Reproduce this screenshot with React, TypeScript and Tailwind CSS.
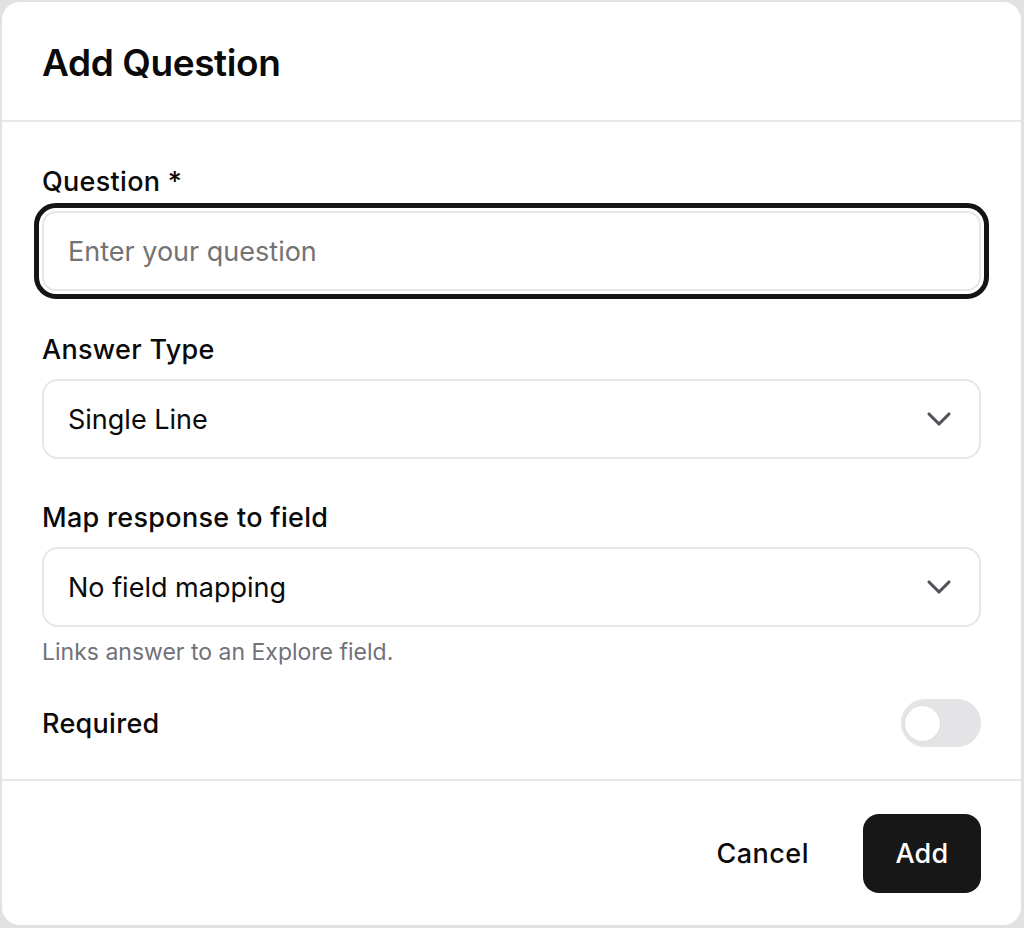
import React from "react";

function Chevron() {
  return (
    <svg width="40" height="40" viewBox="0 0 24 24" fill="none" stroke="#52525b" strokeWidth="1.9" strokeLinecap="round" strokeLinejoin="round">
      <path d="m6 9 6 6 6-6" />
    </svg>
  );
}

function Select({ value }: { value: string }) {
  return (
    <div className="flex h-[80px] w-full items-center justify-between rounded-[16px] border-2 border-[#e7e7e9] bg-white pl-[24px] pr-[20px]">
      <span className="pt-[2px] text-[27px] text-[#0a0a0a]">{value}</span>
      <Chevron />
    </div>
  );
}

export default function App() {
  return (
    <div
      className="h-[928px] w-[1024px] bg-[#e2e2e2] p-[2px] pb-[3px] pr-[3px]"
      style={{ fontFamily: 'Inter, "Noto Sans", sans-serif' }}
    >
      <div className="flex h-full w-full flex-col rounded-[18px] bg-white">
        <div className="flex h-[120px] items-center border-b-2 border-[#e8e8ea] px-[40px] pt-[3px]">
          <h1 className="text-[37px] font-semibold tracking-[-0.4px] text-[#0a0a0a]">Add Question</h1>
        </div>
        <div className="flex flex-col px-[40px] pb-[32px] pt-[38px]">
          <label className="h-[40px] pt-[2px] text-[27px] font-medium leading-[40px] tracking-[0.3px] text-[#0a0a0a]">Question *</label>
          <div className="mt-[11px]">
            <div className="flex h-[80px] w-full items-center rounded-[14px] border-2 border-[#e7e7e9] bg-white pl-[24px] outline-[5px] outline-offset-[3px] outline-[#141414] [outline-style:solid]">
              <span className="pt-[2px] text-[27px] text-[#737373]">Enter your question</span>
            </div>
          </div>

          <label className="mt-[37px] h-[40px] pt-[2px] text-[27px] font-medium leading-[40px] tracking-[0.3px] text-[#0a0a0a]">Answer Type</label>
          <div className="mt-[11px]">
            <Select value="Single Line" />
          </div>

          <label className="mt-[37px] h-[40px] pt-[2px] text-[27px] font-medium leading-[40px] tracking-[0.3px] text-[#0a0a0a]">Map response to field</label>
          <div className="mt-[11px]">
            <Select value="No field mapping" />
          </div>
          <p className="mt-[8px] h-[32px] pt-[1px] text-[23px] leading-[32px] text-[#71717a]">Links answer to an Explore field.</p>

          <div className="mt-[32px] flex h-[48px] items-center justify-between">
            <span className="pt-[2px] text-[27px] font-medium tracking-[0.3px] text-[#0a0a0a]">Required</span>
            <div className="flex h-[48px] w-[80px] items-center rounded-full bg-[#e4e4e7]">
              <div className="ml-[4px] h-[35px] w-[35px] rounded-full bg-white shadow-[0_0_0_1px_rgba(0,0,0,0.03)]" />
            </div>
          </div>
        </div>
        <div className="flex flex-1 items-center justify-end gap-[24px] border-t-2 border-[#e8e8ea] px-[40px]">
          <button className="h-[79px] px-[30px] pt-[2px] text-[27px] font-medium tracking-[0.5px] text-[#0a0a0a]">Cancel</button>
          <button className="h-[79px] w-[118px] rounded-[16px] bg-[#171717] pt-[2px] text-[27px] font-medium tracking-[0.3px] text-white">Add</button>
        </div>
      </div>
    </div>
  );
}
